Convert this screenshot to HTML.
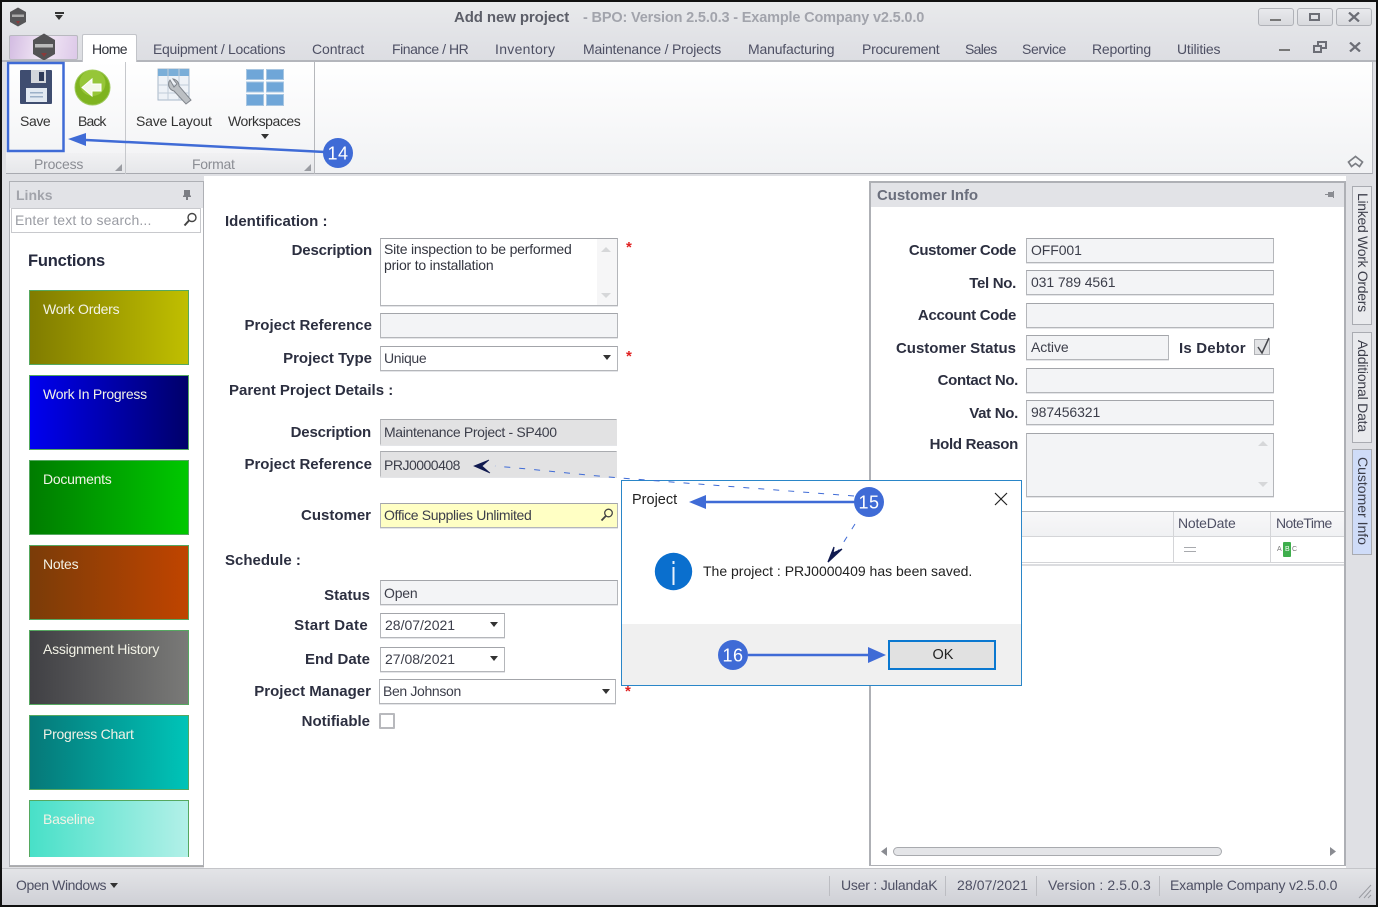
<!DOCTYPE html>
<html><head><meta charset="utf-8"><title>Add new project</title>
<style>
html,body{margin:0;padding:0;background:#000}
#p{position:relative;width:1378px;height:907px;overflow:hidden;background:#dfe0e4;font-family:"Liberation Sans",sans-serif;font-size:14px;color:#333}
#p div,#p span.a{position:absolute;box-sizing:border-box}
.t{white-space:nowrap;line-height:16px;letter-spacing:-.2px}
.m{color:#4e5064;letter-spacing:-.25px}
.l{white-space:nowrap;line-height:16px;font-weight:bold;color:#2c2f40;text-align:right;font-size:15px;letter-spacing:0;transform:translateY(1px)}
.i{border:1px solid #b4b6ba;border-top-color:#a3a5aa;background:#f3f4f6;padding:0 0 0 3px;line-height:22px;white-space:nowrap;color:#3c3e4a;letter-spacing:-.35px;box-shadow:0 1px 0 #e4e5e8}
.c{padding-left:4px;letter-spacing:-.1px}
.w{background:#fff}
.g{background:#e2e2e3}
.f{border:1px solid #55a860;color:#f2f2e6;padding:10px 0 0 13px;line-height:16px;letter-spacing:-.25px;white-space:nowrap}
.dd{width:0;height:0;border-left:4px solid transparent;border-right:4px solid transparent;border-top:5px solid #333}
.s{color:#e02020;font-weight:bold;font-size:15px;line-height:16px}
.vt{writing-mode:vertical-rl;white-space:nowrap;line-height:16px;font-size:14px;letter-spacing:-.2px;color:#3c3e4a}
.tab{border:1px solid #a9abb1;background:#e9eaed}
</style></head><body>
<div id="p">
<!-- window frame -->
<div style="left:0;top:0;width:1378px;height:2px;background:#111"></div>
<div style="left:0;top:0;width:2px;height:907px;background:#111"></div>
<div style="left:1376px;top:0;width:2px;height:907px;background:#111"></div>
<div style="left:0;top:905px;width:1378px;height:2px;background:#111"></div>
<!-- title bar -->
<div style="left:2px;top:2px;width:1374px;height:60px;background:linear-gradient(#e9eaec,#dcdde2)"></div>
<svg style="position:absolute;left:8px;top:7px" width="20" height="20" viewBox="0 0 20 20"><path d="M10 0.5L18 5V15L10 19.5L2 15V5Z" fill="#565658"/><rect x="4" y="7.500" width="12" height="2.500" fill="#aaa"/><path d="M8 14l4 0-2 3z" fill="#8a3a3a"/></svg>
<div style="left:55px;top:12px;width:9px;height:2px;background:#333"></div>
<div class="dd" style="left:55px;top:15px;border-left-width:4.5px;border-right-width:4.5px"></div>
<div class="t" style="left:454px;top:10px;font-weight:bold;color:#5c5e68;font-size:15px;letter-spacing:-.1px">Add new project</div>
<div class="t" style="left:583px;top:10px;color:#a2a4ac;font-weight:bold;font-size:14.500px;letter-spacing:-.16px">- BPO: Version 2.5.0.3 - Example Company v2.5.0.0</div>
<!-- window buttons -->
<div style="left:1258px;top:8px;width:36px;height:18px;border:1px solid #b0b2b8;border-radius:3px;background:linear-gradient(#e9eaed,#d9dade)"></div>
<div style="left:1297px;top:8px;width:36px;height:18px;border:1px solid #b0b2b8;border-radius:3px;background:linear-gradient(#e9eaed,#d9dade)"></div>
<div style="left:1336px;top:8px;width:36px;height:18px;border:1px solid #b0b2b8;border-radius:3px;background:linear-gradient(#e9eaed,#d9dade)"></div>
<div style="left:1270px;top:19px;width:11px;height:2px;background:#777"></div>
<div style="left:1309px;top:13px;width:11px;height:8px;border:2px solid #6c6e76"></div>
<svg style="position:absolute;left:1348px;top:12px" width="12" height="10"><path d="M1 0.5L11 9.5M11 0.5L1 9.5" stroke="#6c6e76" stroke-width="2.2"/></svg>
<!-- app button + tabs -->
<div style="left:9px;top:35px;width:69px;height:25px;border:1px solid #b8b9bf;border-radius:2px;background:linear-gradient(100deg,#d3bce2,#f3e9f6 50%,#dcc8e8)"></div>
<svg style="position:absolute;left:32px;top:33px" width="24" height="28" viewBox="0 0 24 28"><path d="M12 0.5L23 7V21L12 27.5L1 21V7Z" fill="#545355"/><rect x="3" y="11" width="18" height="3.500" fill="#bbb"/><path d="M9 20h6l-3 4z" fill="#8a3a3a"/></svg>
<div style="left:2px;top:60px;width:1374px;height:2px;background:#b4b6bc"></div>
<div style="left:82px;top:34px;width:55px;height:28px;background:#fff;border:1px solid #c2c4c9;border-bottom:0;border-radius:2px 2px 0 0"></div>
<div class="t" style="left:92px;top:41px;color:#2e3038;letter-spacing:-.6px">Home</div>
<div class="t m" style="left:153px;top:41px;letter-spacing:-.3px">Equipment / Locations</div>
<div class="t m" style="left:312px;top:41px;letter-spacing:-.1px">Contract</div>
<div class="t m" style="left:392px;top:41px;letter-spacing:-.45px">Finance / HR</div>
<div class="t m" style="left:495px;top:41px;letter-spacing:.3px">Inventory</div>
<div class="t m" style="left:583px;top:41px;letter-spacing:-.2px">Maintenance / Projects</div>
<div class="t m" style="left:748px;top:41px;letter-spacing:-.18px">Manufacturing</div>
<div class="t m" style="left:862px;top:41px">Procurement</div>
<div class="t m" style="left:965px;top:41px;letter-spacing:-.7px">Sales</div>
<div class="t m" style="left:1022px;top:41px;letter-spacing:-.4px">Service</div>
<div class="t m" style="left:1092px;top:41px;letter-spacing:-.2px">Reporting</div>
<div class="t m" style="left:1177px;top:41px;letter-spacing:-.2px">Utilities</div>
<div style="left:1279px;top:49px;width:11px;height:2px;background:#777"></div>
<svg style="position:absolute;left:1313px;top:41px" width="14" height="12" fill="none" stroke="#6c6e76" stroke-width="2"><path d="M5 4V1H13V7H9"/><rect x="1" y="5" width="7" height="6"/></svg>
<svg style="position:absolute;left:1349px;top:42px" width="12" height="10"><path d="M1 0.5L11 9.5M11 0.5L1 9.5" stroke="#6c6e76" stroke-width="2.2"/></svg>
<!-- ribbon -->
<div style="left:6px;top:62px;width:1367px;height:112px;background:linear-gradient(#fff,#f1f2f4);border-right:1px solid #b8bac0;border-bottom:1px solid #a8aab0"></div>
<div style="left:6px;top:153px;width:309px;height:21px;background:linear-gradient(#f1f1f3,#e6e7ea);border-bottom:1px solid #a8aab0"></div>
<div style="left:125px;top:62px;width:1px;height:112px;background:#c6c8cc"></div>
<div style="left:314px;top:62px;width:1px;height:112px;background:#b6b8bc"></div>
<!-- save icon -->
<svg style="position:absolute;left:19px;top:70px" width="34" height="35" viewBox="0 0 34 35"><path d="M2 0H32Q33 0 33 1V33Q33 34 32 34H2Q1 34 1 33V1Q1 0 2 0Z" fill="#3f4d70"/><path d="M12 0H27V13H12Z" fill="#d3d6dc"/><rect x="20" y="2" width="5" height="9" fill="#2e3a58"/><rect x="7" y="18" width="21" height="14" fill="#e2e9f2"/><rect x="11" y="22" width="13" height="1.500" fill="#9cb0c8"/><rect x="11" y="26" width="13" height="1.500" fill="#9cb0c8"/></svg>
<div class="t" style="left:20px;top:113px;color:#333;letter-spacing:-.4px">Save</div>
<!-- back icon -->
<svg style="position:absolute;left:74px;top:69px" width="37" height="37" viewBox="0 0 37 37"><circle cx="18.500" cy="18.500" r="17.500" fill="#7eb31f" stroke="#9dc95a"/><circle cx="18.500" cy="14" r="13" fill="#a7d24a" opacity=".6"/><path d="M8 18.500L18 10V15H27V22H18V27Z" fill="#f4f8e8" stroke="#fff"/></svg>
<div class="t" style="left:78px;top:113px;color:#333;letter-spacing:-.9px">Back</div>
<!-- save layout icon -->
<svg style="position:absolute;left:157px;top:68px" width="37" height="38" viewBox="0 0 37 38"><rect x="1" y="1" width="31" height="31" fill="#eef2f7" stroke="#a8b8c8"/><rect x="1" y="1" width="31" height="7" fill="#7aaed8"/><path d="M11 1V32M22 1V32M1 17H32M1 25H32" stroke="#c0ccd8"/><path d="M13 12a7 7 0 0 0 4 11L29 36l5-4L22 18a7 7 0 0 0-6-7l4 5-3 3z" fill="#bcc0c4" stroke="#80858c"/></svg>
<div class="t" style="left:136px;top:113px;color:#333">Save Layout</div>
<!-- workspaces icon -->
<svg style="position:absolute;left:246px;top:69px" width="38" height="37" viewBox="0 0 38 37"><g fill="#6fa6d8" stroke="#a7c6e2"><rect x=".5" y=".5" width="17" height="10"/><rect x="20.500" y=".5" width="17" height="10"/><rect x=".5" y="13" width="17" height="10"/><rect x="20.500" y="13" width="17" height="10"/><rect x=".5" y="25.500" width="17" height="11"/><rect x="20.500" y="25.500" width="17" height="11"/></g></svg>
<div class="t" style="left:228px;top:113px;color:#333;letter-spacing:-.45px">Workspaces</div>
<div class="dd" style="left:261px;top:134px"></div>
<div class="t" style="left:34px;top:156px;color:#8b8d94">Process</div>
<div class="t" style="left:192px;top:156px;color:#8b8d94;letter-spacing:-.3px">Format</div>
<svg style="position:absolute;left:115px;top:164px" width="7" height="7"><path d="M7 0V7H0Z" fill="#9a9ca2"/></svg>
<svg style="position:absolute;left:304px;top:164px" width="7" height="7"><path d="M7 0V7H0Z" fill="#9a9ca2"/></svg>
<svg style="position:absolute;left:1347px;top:155px" width="17" height="13" fill="none" stroke="#7c7e84" stroke-width="1.700"><path d="M1.500 7L8.500 1.500L15.500 7L12.500 11.500L8.500 8.500L4.500 11.500Z"/></svg>
<!-- main -->
<div class="w" style="left:204px;top:176px;width:1142px;height:692px"></div>
<!-- links panel -->
<div class="w" style="left:9px;top:181px;width:195px;height:685px;border:1px solid #aeb0b5;box-shadow:0 1px 0 #aaa"></div>
<div style="left:10px;top:182px;width:193px;height:26px;background:#e2e3e7"></div>
<div class="t" style="left:16px;top:187px;font-weight:bold;color:#a2a4ab;letter-spacing:0">Links</div>
<svg style="position:absolute;left:183px;top:190px" width="8" height="10"><path d="M1 0H7V5L8 6V7H5V10H3V7H0V6L1 5Z" fill="#7c7e84"/></svg>
<div style="left:11px;top:208px;width:190px;height:25px;border:1px solid #c8c9cd;background:#fff"></div>
<div class="t" style="left:15px;top:212px;color:#9a9ca3;letter-spacing:.15px">Enter text to search...</div>
<svg style="position:absolute;left:183px;top:212px" width="15" height="15" fill="none" stroke="#444" stroke-width="1.400"><circle cx="9" cy="5.500" r="4"/><path d="M6 8.500L1.500 13.500" stroke-width="2"/></svg>
<div class="t" style="left:28px;top:253px;font-weight:bold;font-size:16.500px;color:#262a3e;letter-spacing:-.2px">Functions</div>
<div class="f" style="left:29px;top:290px;width:160px;height:75px;background:linear-gradient(90deg,#807c00,#c0bf00)">Work Orders</div>
<div class="f" style="left:29px;top:375px;width:160px;height:75px;background:linear-gradient(90deg,#0000f0,#00006a)">Work In Progress</div>
<div class="f" style="left:29px;top:460px;width:160px;height:75px;background:linear-gradient(90deg,#007c00,#00c800)">Documents</div>
<div class="f" style="left:29px;top:545px;width:160px;height:75px;background:linear-gradient(90deg,#7a3c08,#c04400)">Notes</div>
<div class="f" style="left:29px;top:630px;width:160px;height:75px;background:linear-gradient(90deg,#404044,#7a7a78)">Assignment History</div>
<div class="f" style="left:29px;top:715px;width:160px;height:75px;background:linear-gradient(90deg,#067878,#00c4b8)">Progress Chart</div>
<div class="f" style="left:29px;top:800px;width:160px;height:57px;border-bottom:0;background:linear-gradient(90deg,#48e0c8,#b2f0e8)">Baseline</div>
<!-- form -->
<div class="l" style="left:225px;top:213px">Identification :</div>
<div class="l" style="left:212px;width:160px;top:242px;letter-spacing:-.2px">Description</div>
<div class="i w" style="left:380px;top:238px;width:238px;height:68px;line-height:16px;padding-top:2px;color:#33353f;letter-spacing:-.2px">Site inspection to be performed<br>prior to installation</div>
<div style="left:597px;top:239px;width:20px;height:66px;background:#f6f6f7"></div>
<svg style="position:absolute;left:601px;top:247px" width="10" height="5"><path d="M5 0L10 5H0Z" fill="#d6d7d9"/></svg>
<svg style="position:absolute;left:601px;top:293px" width="10" height="5"><path d="M0 0H10L5 5Z" fill="#d6d7d9"/></svg>
<div class="s" style="left:626px;top:240px">*</div>
<div class="l" style="left:212px;width:160px;top:317px">Project Reference</div>
<div class="i" style="left:380px;top:313px;width:238px;height:25px"></div>
<div class="l" style="left:212px;width:160px;top:350px">Project Type</div>
<div class="i w" style="left:380px;top:346px;width:238px;height:25px">Unique</div>
<div class="dd" style="left:603px;top:355px"></div>
<div class="s" style="left:626px;top:349px">*</div>
<div class="l" style="left:229px;top:382px">Parent Project Details :</div>
<div class="l" style="left:212px;width:159px;top:424px;letter-spacing:-.2px">Description</div>
<div class="i g" style="left:380px;top:419px;width:237px;height:26px;border-color:#a9abaf #e2e2e3 #e2e2e3 #b8b9bc;line-height:25px">Maintenance Project - SP400</div>
<div class="l" style="left:212px;width:160px;top:456px">Project Reference</div>
<div class="i g" style="left:380px;top:451px;width:237px;height:26px;border-color:#a9abaf #e2e2e3 #e2e2e3 #b8b9bc;line-height:26px;letter-spacing:-.5px">PRJ0000408</div>
<div class="l" style="left:212px;width:159px;top:507px">Customer</div>
<div class="i" style="left:380px;top:503px;width:238px;height:25px;background:#ffffc4">Office Supplies Unlimited</div>
<svg style="position:absolute;left:600px;top:508px" width="14" height="14" fill="none" stroke="#444" stroke-width="1.300"><circle cx="8.500" cy="5" r="3.800"/><path d="M5.800 8L1.500 12.500" stroke-width="1.800"/></svg>
<div class="l" style="left:225px;top:552px">Schedule :</div>
<div class="l" style="left:212px;width:158px;top:587px">Status</div>
<div class="i" style="left:380px;top:580px;width:238px;height:25px;line-height:24px;letter-spacing:-.2px">Open</div>
<div class="l" style="left:212px;width:156px;top:617px;letter-spacing:.3px">Start Date</div>
<div class="i w" style="left:380px;top:613px;width:125px;height:25px;padding-left:4px;letter-spacing:0">28/07/2021</div>
<div class="dd" style="left:490px;top:622px"></div>
<div class="l" style="left:212px;width:158px;top:651px">End Date</div>
<div class="i w" style="left:380px;top:647px;width:125px;height:25px;padding-left:4px;letter-spacing:0">27/08/2021</div>
<div class="dd" style="left:490px;top:656px"></div>
<div class="l" style="left:212px;width:159px;top:683px">Project Manager</div>
<div class="i w" style="left:379px;top:679px;width:237px;height:25px">Ben Johnson</div>
<div class="dd" style="left:602px;top:689px"></div>
<div class="s" style="left:625px;top:684px">*</div>
<div class="l" style="left:212px;width:158px;top:713px">Notifiable</div>
<div style="left:379px;top:713px;width:16px;height:16px;border:2px solid #b8b9bd;background:#fff;border-radius:1px"></div>
<!-- customer info panel -->
<div class="w" style="left:869px;top:181px;width:477px;height:685px;border:2px solid #aeb0b5;border-bottom-width:1px"></div>
<div style="left:871px;top:183px;width:473px;height:24px;background:#e2e3e7"></div>
<div class="t" style="left:877px;top:188px;font-weight:bold;color:#6a6e7c;font-size:15px;letter-spacing:-.05px">Customer Info</div>
<svg style="position:absolute;left:1325px;top:190px" width="10" height="9"><path d="M0 4H3V2H8V1H9V8H8V7H3V5H0Z" fill="#8a8c92"/></svg>
<div class="l" style="left:880px;width:136px;top:242px;letter-spacing:-.35px">Customer Code</div>
<div class="i c" style="left:1026px;top:238px;width:248px;height:25px">OFF001</div>
<div class="l" style="left:880px;width:136px;top:275px;letter-spacing:-.3px">Tel No.</div>
<div class="i c" style="left:1026px;top:270px;width:248px;height:25px">031 789 4561</div>
<div class="l" style="left:880px;width:136px;top:307px;letter-spacing:-.3px">Account Code</div>
<div class="i c" style="left:1026px;top:303px;width:248px;height:25px"></div>
<div class="l" style="left:880px;width:136px;top:340px">Customer Status</div>
<div class="i c" style="left:1026px;top:335px;width:143px;height:25px">Active</div>
<div class="l" style="left:1179px;top:340px;letter-spacing:.2px">Is Debtor</div>
<div style="left:1254px;top:339px;width:16px;height:16px;background:#e2e3e5;border:1px solid #b0b2b6"></div>
<svg style="position:absolute;left:1254px;top:336px" width="17" height="19" fill="none" stroke="#45474c" stroke-width="1.500"><path d="M4 11L8 17L15 2"/></svg>
<div class="l" style="left:880px;width:138px;top:372px;letter-spacing:-.35px">Contact No.</div>
<div class="i c" style="left:1026px;top:368px;width:248px;height:25px"></div>
<div class="l" style="left:880px;width:138px;top:405px;letter-spacing:-.3px">Vat No.</div>
<div class="i c" style="left:1026px;top:400px;width:248px;height:25px">987456321</div>
<div class="l" style="left:880px;width:138px;top:436px;letter-spacing:-.3px">Hold Reason</div>
<div class="i c" style="left:1026px;top:433px;width:248px;height:64px"></div>
<svg style="position:absolute;left:1258px;top:441px" width="10" height="5"><path d="M5 0L10 5H0Z" fill="#d6d7d9"/></svg>
<svg style="position:absolute;left:1258px;top:482px" width="10" height="5"><path d="M0 0H10L5 5Z" fill="#d6d7d9"/></svg>
<!-- grid -->
<div style="left:872px;top:511px;width:472px;height:26px;background:linear-gradient(#f8f8f9,#f0f1f3);border-top:1px solid #b4b6ba;border-bottom:1px solid #d4d5d8"></div>
<div style="left:872px;top:537px;width:472px;height:26px;background:#fff;border-bottom:1px solid #d4d5d8"></div>
<div style="left:872px;top:564px;width:472px;height:2px;background:#dcdde0"></div>
<div style="left:1173px;top:512px;width:1px;height:51px;background:#d4d5d8"></div>
<div style="left:1270px;top:512px;width:1px;height:51px;background:#d4d5d8"></div>
<div class="t" style="left:1178px;top:515px;color:#4e5064">NoteDate</div>
<div class="t" style="left:1276px;top:515px;color:#4e5064;letter-spacing:-.55px">NoteTime</div>
<div style="left:1184px;top:547px;width:12px;height:1px;background:#a8aaae"></div>
<div style="left:1184px;top:551px;width:12px;height:1px;background:#a8aaae"></div>
<div class="t" style="left:1277px;top:545px;font-size:7px;line-height:9px;color:#777">A</div>
<div style="left:1283px;top:542px;width:8px;height:15px;background:#3eae4c;border-radius:1px"></div>
<div class="t" style="left:1285px;top:545px;font-size:7px;line-height:9px;color:#fff">B</div>
<div class="t" style="left:1292px;top:545px;font-size:7px;line-height:9px;color:#777">C</div>
<!-- h scrollbar -->
<svg style="position:absolute;left:881px;top:847px" width="6" height="9"><path d="M6 0V9L0 4.500Z" fill="#8a8c92"/></svg>
<svg style="position:absolute;left:1330px;top:847px" width="6" height="9"><path d="M0 0V9L6 4.500Z" fill="#8a8c92"/></svg>
<div style="left:893px;top:847px;width:329px;height:9px;border:1px solid #a8aaae;border-radius:5px;background:#e4e5e8"></div>
<!-- side tabs -->
<div class="tab" style="left:1352px;top:186px;width:20px;height:139px"></div>
<div class="vt" style="left:1355px;top:193px;letter-spacing:-.3px">Linked Work Orders</div>
<div class="tab" style="left:1352px;top:332px;width:20px;height:111px"></div>
<div class="vt" style="left:1355px;top:340px">Additional Data</div>
<div class="tab" style="left:1352px;top:449px;width:20px;height:106px;background:#cfdcf8"></div>
<div class="vt" style="left:1355px;top:457px;letter-spacing:0">Customer Info</div>
<!-- status bar -->
<div style="left:2px;top:868px;width:1374px;height:37px;background:linear-gradient(#e3e4e7,#cfd0d6);border-top:1px solid #c4c5c9"></div>
<div class="t m" style="left:16px;top:877px;letter-spacing:-.4px">Open Windows</div>
<div class="dd" style="left:110px;top:883px;border-top-color:#333"></div>
<div style="left:829px;top:876px;width:1px;height:20px;background:#bcbdc2"></div>
<div style="left:945px;top:876px;width:1px;height:20px;background:#bcbdc2"></div>
<div style="left:1036px;top:876px;width:1px;height:20px;background:#bcbdc2"></div>
<div style="left:1159px;top:876px;width:1px;height:20px;background:#bcbdc2"></div>
<div class="t m" style="left:841px;top:877px;letter-spacing:-.22px">User : JulandaK</div>
<div class="t m" style="left:957px;top:877px;letter-spacing:.1px">28/07/2021</div>
<div class="t m" style="left:1048px;top:877px;letter-spacing:.1px">Version : 2.5.0.3</div>
<div class="t m" style="left:1170px;top:877px;letter-spacing:-.2px">Example Company v2.5.0.0</div>
<svg style="position:absolute;left:1358px;top:884px" width="14" height="15" stroke="#9a9ca2"><path d="M1 14L13 1M6 14L13 6M10 14L13 11"/></svg>
<!-- dialog -->
<div style="left:621px;top:480px;width:401px;height:206px;background:#fff;border:1px solid #2a86c8"></div>
<div style="left:622px;top:624px;width:399px;height:61px;background:#f0f0f0"></div>
<div class="t" style="left:632px;top:492px;color:#222;font-size:14.500px;letter-spacing:0">Project</div>
<svg style="position:absolute;left:994px;top:492px" width="14" height="14"><path d="M1 1L13 13M13 1L1 13" stroke="#222" stroke-width="1.200"/></svg>
<svg style="position:absolute;left:654px;top:552px" width="39" height="39"><circle cx="19.500" cy="19.500" r="18.700" fill="#0a6fce"/><rect x="18.500" y="15" width="2" height="18" fill="#e8f2fc"/><rect x="18.500" y="9" width="2" height="3" fill="#e8f2fc"/></svg>
<div class="t" style="left:703px;top:563px;color:#222;letter-spacing:0">The project : PRJ0000409 has been saved.</div>
<div style="left:888px;top:640px;width:108px;height:30px;background:#e1e1e1;border:2px solid #0a78d0;color:#222;text-align:center;line-height:26px;font-size:14.500px;padding-left:2px">OK</div>
<!-- annotations -->
<svg style="position:absolute;left:0;top:0" width="1378" height="907">
<rect x="8" y="63" width="55.500" height="88" fill="none" stroke="#3f6bd6" stroke-width="2.500"/>
<path d="M86 140L325 152" stroke="#3f6bd6" stroke-width="2.500" fill="none"/>
<path d="M68 139L86 133V146Z" fill="#3f6bd6"/>
<path d="M705 502H856" stroke="#3f6bd6" stroke-width="2.500"/>
<path d="M689 502L706 495V509Z" fill="#3f6bd6"/>
<path d="M748 655H870" stroke="#3f6bd6" stroke-width="2.500"/>
<path d="M886 655L868 647V663Z" fill="#3f6bd6"/>
<path d="M854 496L620 478C585 475 540 470 495 466" stroke="#3f6bd6" stroke-width="1" stroke-dasharray="6 9" fill="none"/>
<path d="M489 460L474 466L490 473L482 466Z" fill="#101a50" stroke="#101a50" stroke-width=".7"/>
<path d="M855 524L835 556" stroke="#3f6bd6" stroke-width="1" stroke-dasharray="6 9" fill="none"/>
<path d="M842 549L828 562L834 547L833 553Z" fill="#101a50" stroke="#101a50" stroke-width="1.200"/>
<circle cx="338" cy="153" r="15" fill="#3f6bd6"/>
<circle cx="869" cy="502" r="15" fill="#3f6bd6"/>
<circle cx="733" cy="655" r="15" fill="#3f6bd6"/>
<text x="338" y="159.500" text-anchor="middle" fill="#fff" font-family="Liberation Sans, sans-serif" font-size="18" letter-spacing=".5">14</text>
<text x="869" y="508.500" text-anchor="middle" fill="#fff" font-family="Liberation Sans, sans-serif" font-size="18" letter-spacing=".5">15</text>
<text x="733" y="661.500" text-anchor="middle" fill="#fff" font-family="Liberation Sans, sans-serif" font-size="18" letter-spacing=".5">16</text>
</svg>
</div>
</body></html>
